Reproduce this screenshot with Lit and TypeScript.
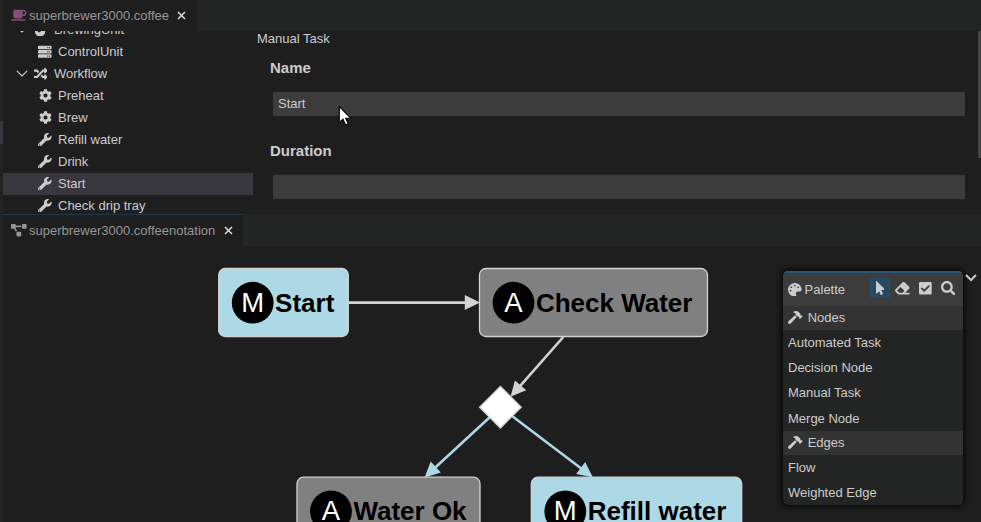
import { LitElement, html, svg, css } from "lit";
import { customElement } from "lit/decorators.js";

const dot = (x: number, y: number, r: number) => `M${x - r} ${y}a${r} ${r} 0 1 0 ${2 * r} 0a${r} ${r} 0 1 0 ${-2 * r} 0z`;
const serverBay = (y: number) =>
  `M480 ${y + 128}H32c-17.7 0-32-14.3-32-32V${y + 32}c0-17.7 14.3-32 32-32h448c17.7 0 32 14.3 32 32v64c0 17.7-14.3 32-32 32z${dot(432, y + 64, 24)}${dot(368, y + 64, 24)}`;

const ICONS: Record<string, { w: number; d: string }> = {
  coffee: { w: 640, d: "M192 384h192c53 0 96-43 96-96h32c70.6 0 128-57.4 128-128S582.6 32 512 32H120c-13.3 0-24 10.7-24 24v232c0 53 43 96 96 96zM512 96c35.3 0 64 28.7 64 64s-28.7 64-64 64h-32V96h32zm47.7 384H48.3c-47.6 0-61-64-36-64h583.3c25 0 11.8 64-35.9 64z" },
  server: { w: 512, d: serverBay(32) + serverBay(192) + serverBay(352) },
  fire: { w: 384, d: "M216 23.9c0-23.8-30.7-33-44-13.2C48 192 224 200 224 288c0 35.6-29.1 64.5-64.8 64-35.1-.5-63.2-29.8-63.2-64.9v-85.5c0-21.7-26.5-32.2-41.4-16.5C27.8 213.2 0 261.3 0 320c0 105.9 86.1 192 192 192s192-86.1 192-192c0-170.3-168-193-168-296.1z" },
  random: { w: 512, d: "M504.971 359.029c9.373 9.373 9.373 24.569 0 33.941l-80 79.984c-15.01 15.01-40.971 4.49-40.971-16.971V416h-58.785a12.004 12.004 0 0 1-8.773-3.812l-70.556-75.596 53.333-57.143L352 336h32v-39.981c0-21.438 25.943-31.998 40.971-16.971l80 79.981zM12 176h84l52.781 56.551 53.333-57.143-70.556-75.596A11.999 11.999 0 0 0 122.785 96H12c-6.627 0-12 5.373-12 12v56c0 6.627 5.373 12 12 12zm372 0v39.984c0 21.46 25.961 31.98 40.971 16.971l80-79.984c9.373-9.373 9.373-24.569 0-33.941l-80-79.981C409.943 24.021 384 34.582 384 56.019V96h-58.785a12.004 12.004 0 0 0-8.773 3.812L96 336H12c-6.627 0-12 5.373-12 12v56c0 6.627 5.373 12 12 12h110.785c3.326 0 6.503-1.381 8.773-3.812L352 176h32z" },
  cog: { w: 512, d: "M487.4 315.7l-42.6-24.6c4.3-23.2 4.3-47 0-70.2l42.6-24.6c4.9-2.8 7.1-8.6 5.5-14-11.1-35.6-30-67.8-54.7-94.6-3.8-4.1-10-5.1-14.8-2.3L380.8 110c-17.9-15.4-38.5-27.3-60.8-35.1V25.8c0-5.6-3.9-10.5-9.4-11.7-36.7-8.2-74.3-7.8-109.2 0-5.5 1.2-9.4 6.1-9.4 11.7V75c-22.2 7.9-42.8 19.8-60.8 35.1L88.7 85.5c-4.9-2.8-11-1.9-14.8 2.3-24.7 26.7-43.6 58.9-54.7 94.6-1.7 5.4.6 11.2 5.5 14L67.3 221c-4.3 23.2-4.3 47 0 70.2l-42.6 24.6c-4.9 2.8-7.1 8.6-5.5 14 11.1 35.6 30 67.8 54.7 94.6 3.8 4.1 10 5.1 14.8 2.3l42.6-24.6c17.9 15.4 38.5 27.3 60.8 35.1v49.2c0 5.6 3.9 10.5 9.4 11.7 36.7 8.2 74.3 7.8 109.2 0 5.5-1.2 9.4-6.1 9.4-11.7v-49.2c22.2-7.9 42.8-19.8 60.8-35.1l42.6 24.6c4.9 2.8 11 1.9 14.8-2.3 24.7-26.7 43.6-58.9 54.7-94.6 1.5-5.5-.7-11.3-5.6-14.1zM256 336c-44.1 0-80-35.9-80-80s35.9-80 80-80 80 35.9 80 80-35.9 80-80 80z" },
  wrench: { w: 512, d: "M507.73 109.1c-2.24-9.03-13.54-12.09-20.12-5.51l-74.36 74.36-67.88-11.31-11.31-67.88 74.36-74.36c6.62-6.62 3.43-17.9-5.66-20.16-47.38-11.74-99.55.91-136.58 37.93-39.64 39.64-50.55 97.1-34.05 147.2L18.74 402.76c-24.99 24.99-24.99 65.51 0 90.5 24.99 24.99 65.51 24.99 90.5 0l213.21-213.21c50.12 16.71 107.47 5.68 147.37-34.22 37.07-37.07 49.7-89.32 37.91-136.73zM64 472c-13.25 0-24-10.75-24-24 0-13.26 10.75-24 24-24s24 10.74 24 24c0 13.25-10.75 24-24 24z" },
  diagram: { w: 640, d: "M384 320H256c-17.67 0-32 14.33-32 32v128c0 17.67 14.33 32 32 32h128c17.67 0 32-14.33 32-32V352c0-17.67-14.33-32-32-32zM192 32c0-17.67-14.33-32-32-32H32C14.33 0 0 14.33 0 32v128c0 17.67 14.33 32 32 32h95.72l73.16 128.04C211.98 300.98 232.4 288 256 288h.28L192 175.51V128h224V64H192V32zM608 0H480c-17.67 0-32 14.33-32 32v128c0 17.67 14.33 32 32 32h128c17.67 0 32-14.33 32-32V32c0-17.67-14.33-32-32-32z" },
  palette: { w: 512, d: "M204.3 5C104.9 24.4 24.8 104.3 5.2 203.4c-37 187 131.7 326.4 258.8 306.7 41.2-6.4 61.4-54.6 42.5-91.7-23.1-45.4 9.9-98.4 60.9-98.4h79.7c35.8 0 64.8-29.6 64.9-65.3C511.5 97.1 368.1-26.9 204.3 5z" + dot(96, 288, 32) + dot(128, 160, 32) + dot(256, 96, 32) + dot(384, 160, 32) },
  pointer: { w: 320, d: "M302.189 329.126H196.105l55.831 135.993c3.889 9.428-.555 19.999-9.444 23.999l-49.165 21.427c-9.165 4-19.443-.571-23.332-9.714l-53.053-129.136-86.664 89.138C18.729 472.71 0 463.554 0 447.977V18.299C0 1.899 19.921-6.096 30.277 5.443l284.412 292.542c11.472 11.179 3.007 31.141-12.5 31.141z" },
  eraser: { w: 512, d: "M497.941 273.941c18.745-18.745 18.745-49.137 0-67.882l-160-160c-18.745-18.745-49.136-18.746-67.883 0l-256 256c-18.745 18.745-18.745 49.137 0 67.882l96 96A48.004 48.004 0 0 0 144 480h356c6.627 0 12-5.373 12-12v-40c0-6.627-5.373-12-12-12H355.883l142.058-142.059zm-302.627-62.627l137.373 137.373L265.373 416H150.628l-80-80 124.686-124.686z" },
  check: { w: 448, d: "M400 480H48c-26.51 0-48-21.49-48-48V80c0-26.51 21.49-48 48-48h352c26.51 0 48 21.49 48 48v352c0 26.51-21.49 48-48 48zm-204.686-98.059l184-184c6.248-6.248 6.248-16.379 0-22.627l-22.627-22.627c-6.248-6.248-16.379-6.249-22.628 0L184 302.745l-70.059-70.059c-6.248-6.248-16.379-6.248-22.628 0l-22.627 22.627c-6.248 6.248-6.248 16.379 0 22.627l104 104c6.249 6.25 16.379 6.25 22.628.001z" },
  search: { w: 512, d: "M505 442.7L405.3 343c-4.5-4.5-10.6-7-17-7H372c27.6-35.3 44-79.7 44-128C416 93.1 322.9 0 208 0S0 93.1 0 208s93.1 208 208 208c48.3 0 92.7-16.4 128-44v16.3c0 6.4 2.5 12.5 7 17l99.7 99.7c9.4 9.4 24.6 9.4 33.9 0l28.3-28.3c9.4-9.4 9.4-24.6.1-34zM208 336c-70.7 0-128-57.2-128-128 0-70.7 57.2-128 128-128 70.7 0 128 57.2 128 128 0 70.7-57.2 128-128 128z" },
  hammer: { w: 576, d: "M571.31 193.94l-22.63-22.63c-6.25-6.25-16.38-6.25-22.63 0l-11.31 11.31-28.9-28.9c5.63-21.31.36-44.9-16.35-61.61l-45.25-45.25c-62.48-62.48-163.79-62.48-226.28 0l90.51 45.25v18.75c0 16.97 6.74 33.25 18.75 45.25l49.14 49.14c16.71 16.71 40.3 21.98 61.61 16.35l28.9 28.9-11.31 11.31c-6.25 6.25-6.25 16.38 0 22.63l22.63 22.63c6.25 6.25 16.38 6.25 22.63 0l90.51-90.51c6.23-6.24 6.23-16.37-.02-22.62zm-286.72-15.2c-3.7-3.7-6.84-7.79-9.85-11.95L19.64 404.96c-25.57 23.88-26.26 64.19-1.53 88.93s65.05 24.05 88.92-1.53l238.13-255.07c-3.96-2.91-7.9-5.87-11.44-9.41l-49.13-49.14z" },
};

const icon = (name: string, h = 13) => {
  const { w, d } = ICONS[name];
  return html`<svg class="icon" width=${(w / 512) * h} height=${h} viewBox="0 0 ${w} 512"><path fill-rule="evenodd" d=${d} /></svg>`;
};

const closeIcon = html`<svg class="close" width="9" height="9" viewBox="0 0 9 9"><path d="M1 1l7 7M8 1L1 8" /></svg>`;
const chevron = html`<svg class="chevron" width="12" height="7" viewBox="0 0 12 7"><path d="M.8.8L6 6 11.2.8" /></svg>`;

const TREE = [
  { label: "BrewingUnit", icon: "fire", group: true },
  { label: "ControlUnit", icon: "server" },
  { label: "Workflow", icon: "random", group: true },
  { label: "Preheat", icon: "cog" },
  { label: "Brew", icon: "cog" },
  { label: "Refill water", icon: "wrench" },
  { label: "Drink", icon: "wrench" },
  { label: "Start", icon: "wrench", selected: true },
  { label: "Check drip tray", icon: "wrench" },
];

const NODES = [
  { x: 218.7, y: 268.5, w: 129.6, kind: "M", label: "Start" },
  { x: 479.5, y: 268.5, w: 228, kind: "A", label: "Check Water" },
  { x: 297, y: 477.2, w: 183, kind: "A", label: "Water Ok" },
  { x: 531.3, y: 477.2, w: 210.4, kind: "M", label: "Refill water" },
];

const EDGES = [
  { from: [348.5, 302.6], to: [480, 302.6], cls: "plain" },
  { from: [563.3, 337], to: [510.5, 396.8], cls: "plain" },
  { from: [490, 417], to: [424.6, 477.4], cls: "blue" },
  { from: [512, 416], to: [592.8, 477.2], cls: "blue" },
];

const PALETTE = [
  { title: "Nodes", items: ["Automated Task", "Decision Node", "Manual Task", "Merge Node"] },
  { title: "Edges", items: ["Flow", "Weighted Edge"] },
];

@customElement("model-tree")
export class ModelTree extends LitElement {
  static styles = css`
    :host { display: block; width: 250px; flex: none; overflow: hidden; }
    .list { margin-top: -12px; }
    .row { display: flex; align-items: center; height: 22px; padding: 0 0 1px 35px; gap: 6px; white-space: nowrap; box-sizing: border-box; line-height: 15px; }
    .group { padding-left: 13px; }
    .group .slot { margin-left: -.5px; margin-right: .5px; }
    .selected { background: #37373d; }
    .slot { width: 14px; display: flex; justify-content: center; }
    .icon { fill: #ccc; }
    .chevron { fill: none; stroke: #ccc; stroke-width: 1.2; }
  `;
  render() {
    return html`<div class="list">
      ${TREE.map((r) => html`<div class="row ${r.group ? "group" : ""} ${r.selected ? "selected" : ""}">
        ${r.group ? chevron : ""}<span class="slot">${icon(r.icon, r.icon === "cog" ? 13 : 13.6)}</span><span>${r.label}</span>
      </div>`)}
    </div>`;
  }
}

@customElement("flow-diagram")
export class FlowDiagram extends LitElement {
  static styles = css`
    :host { display: block; }
    svg { display: block; }
    .box { stroke: #d3d3d3; stroke-width: 1.3; }
    .M { fill: #add8e6; }
    .A { fill: #808080; }
    .kind { font-size: 27.5px; fill: #fff; text-anchor: middle; }
    .label { font-size: 26px; font-weight: bold; fill: #000; }
    .edge { fill: none; stroke-width: 2.6; }
    .plain { stroke: #d3d3d3; }
    .blue { stroke: #add8e6; }
    .head { stroke: none; }
    .head.plain { fill: #d3d3d3; }
    .head.blue { fill: #add8e6; }
    .diamond { fill: #fff; stroke: #d3d3d3; stroke-width: 1.3; }
  `;
  render() {
    return html`<svg width="978" height="276" viewBox="3 246 978 276">
      ${NODES.map((n) => svg`<g>
        <rect class="box ${n.kind}" x=${n.x} y=${n.y} width=${n.w} height="68" rx="6.5" />
        <circle cx=${n.x + 34} cy=${n.y + 34.2} r="20.9" />
        <text class="kind" x=${n.x + 34} y=${n.y + 43.1}>${n.kind}</text>
        <text class="label" x=${n.x + 56.4} y=${n.y + 43.1}>${n.label}</text>
      </g>`)}
      ${EDGES.map((e) => {
        const [x1, y1] = e.from;
        const [x2, y2] = e.to;
        const deg = (Math.atan2(y2 - y1, x2 - x1) * 180) / Math.PI;
        const len = Math.hypot(x2 - x1, y2 - y1);
        return svg`<g transform="translate(${x2} ${y2}) rotate(${deg})">
          <path class="edge ${e.cls}" d="M${-len} 0H-12" />
          <path class="head ${e.cls}" d="M0 0L-15.2 -7.5V7.5z" />
        </g>`;
      })}
      <path class="diamond" d="M500.4 386.4L521.2 407.2 500.4 428 479.6 407.2z" />
    </svg>`;
  }
}

@customElement("tool-palette")
export class ToolPalette extends LitElement {
  static styles = css`
    :host { display: block; width: 180px; border-radius: 5px; overflow: hidden; background: #222524; box-shadow: 0 0 6px 1px #000; color: #ccc; }
    .header { display: flex; align-items: center; box-sizing: border-box; height: 35px; padding: 0 5px; border-top: 2px solid #2a5878; background: #3c3c3c; }
    .title { display: flex; align-items: center; gap: 3px; flex: 1; line-height: 15px; }
    .tools { display: flex; gap: 2.7px; padding-bottom: 3px; }
    .tool { display: flex; align-items: center; justify-content: center; width: 20px; height: 20px; }
    .active { background: #264a66; }
    .icon { fill: #ccc; }
    .group { display: flex; align-items: center; gap: 5px; box-sizing: border-box; height: 24px; padding: 0 0 1px 5px; line-height: 15px; background: #333; }
    .item { height: 25.2px; line-height: 25.2px; padding-left: 5px; }
  `;
  render() {
    return html`
      <div class="header">
        <div class="title">${icon("palette", 13.6)}<span>Palette</span></div>
        <div class="tools">
          <span class="tool active">${icon("pointer", 14)}</span>
          <span class="tool">${icon("eraser", 14.5)}</span>
          <span class="tool">${icon("check", 14.5)}</span>
          <span class="tool">${icon("search", 14.5)}</span>
        </div>
      </div>
      ${PALETTE.map((g) => html`
        <div class="group">${icon("hammer", 13)}<span>${g.title}</span></div>
        ${g.items.map((i) => html`<div class="item">${i}</div>`)}
      `)}
    `;
  }
}

@customElement("app-root")
export class AppRoot extends LitElement {
  static styles = css`
    :host { display: flex; width: 981px; height: 522px; overflow: hidden; position: relative; background: #1e1e1e; color: #ccc; font: 13px "Liberation Sans", Arial, sans-serif; }
    .gutter { width: 3px; flex: none; background: #222222; }
    .mark { margin-top: 121px; height: 23px; background: #37373d; }
    .main { flex: 1; min-width: 0; display: flex; flex-direction: column; }
    .tabs { display: flex; flex: none; background: #222524; }
    .tabs.top { height: 31px; }
    .tabs.bottom { height: 32px; }
    .tab { display: flex; align-items: center; box-sizing: border-box; padding-left: 8px; background: #1e1e1e; color: #969696; white-space: nowrap; }
    .top .tab { width: 194px; }
    .bottom .tab { width: 240px; border-top: 1px solid #1b3a52; }
    .tab .name { margin-left: 2.4px; flex: none; }
    .coffee .icon { fill: #854f7c; }
    .flow .icon { fill: #969696; }
    .close { stroke: #ddd; stroke-width: 1.5; margin-left: 8px; }
    .flow .close { margin-left: 8.6px; }
    .editor { display: flex; height: 183px; }
    .form { position: relative; flex: 1; padding: 0 16px 0 4px; }
    .type { line-height: 15px; }
    .field-label { font-size: 15px; font-weight: bold; line-height: 18px; margin-left: 13px; }
    .input { box-sizing: border-box; height: 24px; line-height: 24px; margin: 15px 0 0 16px; padding-left: 5px; background: #3c3c3c; }
    .name-label { margin-top: 13px; }
    .duration-label { margin-top: 26px; }
    .scroll { position: absolute; right: 0; top: 0; width: 3px; height: 127px; background: #454545; }
    .canvas { position: relative; height: 276px; }
    .palette { position: absolute; left: 780px; top: 25px; }
    .collapse { position: absolute; left: 961.5px; top: 28px; fill: none; stroke: #ccc; stroke-width: 2; }
    .cursor { position: absolute; left: 338px; top: 105px; }
  `;
  render() {
    return html`
      <div class="gutter"><div class="mark"></div></div>
      <div class="main">
        <div class="tabs top"><div class="tab coffee">${icon("coffee", 12.5)}<span class="name">superbrewer3000.coffee</span>${closeIcon}</div></div>
        <div class="editor">
          <model-tree></model-tree>
          <div class="form">
            <div class="type">Manual Task</div>
            <div class="field-label name-label">Name</div>
            <div class="input">Start</div>
            <div class="field-label duration-label">Duration</div>
            <div class="input"></div>
            <div class="scroll"></div>
          </div>
        </div>
        <div class="tabs bottom"><div class="tab flow">${icon("diagram", 12.5)}<span class="name">superbrewer3000.coffeenotation</span>${closeIcon}</div></div>
        <div class="canvas">
          <flow-diagram></flow-diagram>
          <tool-palette class="palette"></tool-palette>
          <svg class="collapse" width="12" height="8" viewBox="0 0 12 8"><path d="M1 1l5 5 5-5" /></svg>
        </div>
      </div>
      <svg class="cursor" width="14" height="22" viewBox="0 0 14 22"><path d="M1.3 1.5V17.5L5 14.2 7.6 20 10.2 18.8 7.7 13.2H12.7z" fill="#fff" stroke="#000" stroke-width="1.1" /></svg>
    `;
  }
}
